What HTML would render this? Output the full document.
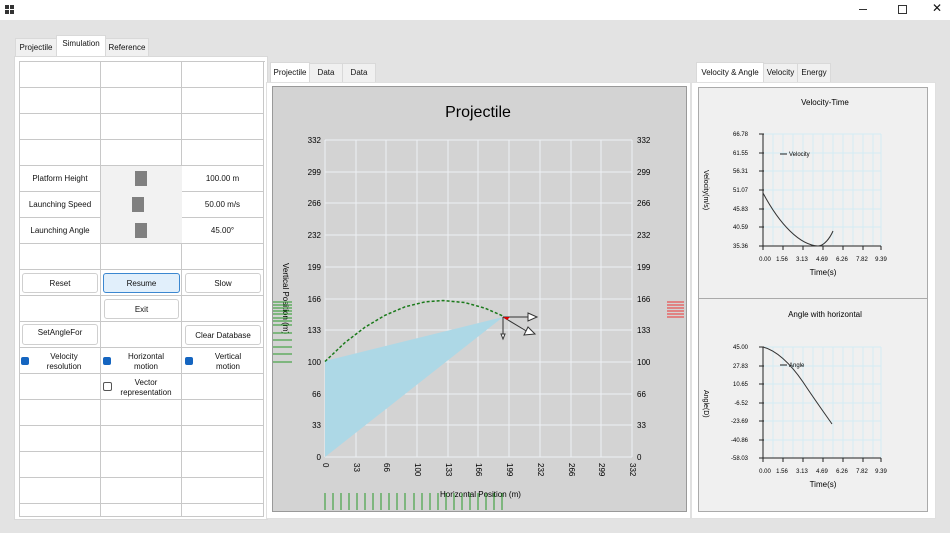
<!DOCTYPE html><html><head><style>
body{margin:0;width:950px;height:533px;background:#e3e3e3;font-family:"Liberation Sans",sans-serif;font-size:8px;color:#111;position:relative;overflow:hidden}
.a{position:absolute}
.tab{position:absolute;background:#f0f0f0;border:1px solid #d9d9d9;border-bottom:none;font-size:8px;text-align:center;line-height:18px}
.tab.s{background:#fff;line-height:16px}
.cell{position:absolute;border-right:1px solid #c8c8c8;border-bottom:1px solid #c8c8c8;box-sizing:border-box;display:flex;align-items:center;justify-content:center;text-align:center;font-size:8px}
.btn{position:absolute;background:#fff;border:1px solid #cfcfcf;border-radius:3px;box-sizing:border-box;display:flex;align-items:center;justify-content:center;font-size:8px}
.cb{position:absolute;width:8px;height:8px;border-radius:2px;background:#1565c0}
</style></head><body>
<div class="a" style="left:0;top:0;width:950px;height:20px;background:#fff"></div>
<div class="a" style="left:5px;top:5px;width:4px;height:4px;background:#333;box-shadow:5px 0 #333,0 5px #333,5px 5px #333"></div>
<div class="a" style="left:859px;top:9px;width:8px;height:1px;background:#333"></div>
<div class="a" style="left:898px;top:5px;width:7px;height:7px;border:1px solid #333"></div>
<div class="a" style="left:932px;top:1px;font-size:12px">✕</div>

<div class="tab" style="left:15px;top:38px;width:40px">Projectile</div>
<div class="tab s" style="left:56px;top:35px;width:48px;height:21px">Simulation</div>
<div class="tab" style="left:105px;top:38px;width:42px">Reference</div>
<div class="a" style="left:14px;top:56px;width:252px;height:462px;background:#fff;border:1px solid #d9d9d9"></div>
<div class="a" style="left:19px;top:61px;width:245px;height:455px;border-left:1px solid #c8c8c8;border-top:1px solid #c8c8c8"></div>
<div id="g"></div>

<div class="tab s" style="left:270px;top:62px;width:38px;height:20px;line-height:20px">Projectile</div>
<div class="tab" style="left:309px;top:63px;width:32px">Data</div>
<div class="tab" style="left:342px;top:63px;width:32px">Data</div>
<div class="a" style="left:266px;top:82px;width:423px;height:435px;background:#fff;border:1px solid #e0e0e0"></div>
<div class="a" style="left:272px;top:86px;width:413px;height:424px;background:#d3d3d3;border:1px solid #999"></div>
<svg class="a" style="left:0;top:0" width="950" height="533">
<text x="478" y="117" font-size="16" text-anchor="middle" font-family="Liberation Sans">Projectile</text>
<g stroke="#eef0f4" stroke-width="1" fill="none">
<path d="M325 140V457M356 140V457M386 140V457M417 140V457M448 140V457M478 140V457M509 140V457M540 140V457M571 140V457M601 140V457M632 140V457M325 140H632M325 172H632M325 203H632M325 235H632M325 267H632M325 299H632M325 330H632M325 362H632M325 394H632M325 425H632M325 457H632"/></g>
<polygon points="325,361 503,317 325,457" fill="#add8e6"/>
<polyline points="325,361.5 345,342.6 365,327.2 385,315.3 405,306.8 425,301.9 443,300.5 465,302.6 485,308.2 503,316" fill="none" stroke="#1a7a1a" stroke-width="1.5" stroke-dasharray="3,2"/>
<g stroke="#333" fill="none" stroke-width="1"><path d="M503 317H530M503 317V336M503 317L528 332"/><path d="M528 313L537 317L528 321Z" fill="#fff"/><path d="M524 335L535 334L528 327Z" fill="#fff"/><path d="M501 334L503 339L505 334Z" fill="#fff"/></g>
<path d="M503 317L510 317L507 320Z" fill="#d00"/>
<g font-size="8" text-anchor="end">
<text x="321" y="143">332</text><text x="321" y="175">299</text><text x="321" y="206">266</text><text x="321" y="238">232</text><text x="321" y="270">199</text><text x="321" y="302">166</text><text x="321" y="333">133</text><text x="321" y="365">100</text><text x="321" y="397">66</text><text x="321" y="428">33</text><text x="321" y="460">0</text></g>
<g font-size="8"><text x="637" y="143">332</text><text x="637" y="175">299</text><text x="637" y="206">266</text><text x="637" y="238">232</text><text x="637" y="270">199</text><text x="637" y="302">166</text><text x="637" y="333">133</text><text x="637" y="365">100</text><text x="637" y="397">66</text><text x="637" y="428">33</text><text x="637" y="460">0</text></g>
<g font-size="8"><text transform="translate(323,463) rotate(90)">0</text><text transform="translate(354,463) rotate(90)">33</text><text transform="translate(384,463) rotate(90)">66</text><text transform="translate(415,463) rotate(90)">100</text><text transform="translate(446,463) rotate(90)">133</text><text transform="translate(476,463) rotate(90)">166</text><text transform="translate(507,463) rotate(90)">199</text><text transform="translate(538,463) rotate(90)">232</text><text transform="translate(569,463) rotate(90)">266</text><text transform="translate(599,463) rotate(90)">299</text><text transform="translate(630,463) rotate(90)">332</text>
<text transform="translate(283,263) rotate(90)">Vertical Position (m)</text>
<text x="440" y="497">Horizontal Position (m)</text></g>
<g stroke="#2a9a2a" fill="none"><path d="M273 302H292M273 305H292M273 308H292M273 311H292M273 314H292M273 318H292M273 321H292M273 325H292M273 333H292M273 340H292M273 347H292M273 354H292M273 362H292"/>
<path d="M325 510V493M333 510V493M341 510V493M349 510V493M357 510V493M365 510V493M373 510V493M381 510V493M389 510V493M397 510V493M405 510V493M414 510V493M422 510V493M430 510V493M438 510V493M446 510V493M454 510V493M462 510V493M470 510V493M478 510V493M486 510V493M494 510V493M502 510V493"/></g>
<g stroke="#e33" fill="none"><path d="M667 302H684M667 305H684M667 308H684M667 311H684M667 314H684M667 317H684"/></g>
</svg>

<div class="tab s" style="left:696px;top:62px;width:66px;height:20px;line-height:20px">Velocity &amp; Angle</div>
<div class="tab" style="left:763px;top:63px;width:33px">Velocity</div>
<div class="tab" style="left:797px;top:63px;width:32px">Energy</div>
<div class="a" style="left:691px;top:82px;width:243px;height:435px;background:#fff;border:1px solid #e0e0e0"></div>
<div class="a" style="left:698px;top:87px;width:228px;height:211px;background:#f0f0f0;border:1px solid #aaa"></div>
<div class="a" style="left:698px;top:298px;width:228px;height:212px;background:#f0f0f0;border:1px solid #aaa"></div>
<svg class="a" style="left:0;top:0" width="950" height="533" font-family="Liberation Sans" font-size="6">
<text x="825" y="105" font-size="8" text-anchor="middle">Velocity-Time</text>
<text x="825" y="317" font-size="8" text-anchor="middle">Angle with horizontal</text>
<g stroke="#d4ecf4" fill="none"><path d="M763 134H881M763 153H881M763 171H881M763 190H881M763 209H881M763 227H881M763 246H881M773 134V246M783 134V246M793 134V246M803 134V246M813 134V246M823 134V246M833 134V246M843 134V246M853 134V246M863 134V246M873 134V246M881 134V246"/>
<path d="M763 347H881M763 366H881M763 384H881M763 403H881M763 421H881M763 440H881M763 458H881M773 347V458M783 347V458M793 347V458M803 347V458M813 347V458M823 347V458M833 347V458M843 347V458M853 347V458M863 347V458M873 347V458M881 347V458"/></g>
<g stroke="#222" fill="none"><path d="M763 134V246H881M759 134H764M759 153H764M759 171H764M759 190H764M759 209H764M759 227H764M759 246H764M763 246V250M783 246V250M803 246V250M823 246V250M843 246V250M863 246V250M881 246V250"/>
<path d="M763 347V458H881M759 347H764M759 366H764M759 384H764M759 403H764M759 421H764M759 440H764M759 458H764M763 458V462M783 458V462M803 458V462M823 458V462M843 458V462M863 458V462M881 458V462"/>
<path d="M780 154H787M780 365H787"/></g>
<path d="M763 193C780 225 800 245 818 246C824 246 830 238 833 231" fill="none" stroke="#333"/>
<path d="M763 347C775 350 790 362 805 385C815 400 825 414 832 424" fill="none" stroke="#333"/>
<text x="789" y="156">Velocity</text><text x="789" y="367">Angle</text>
<g text-anchor="end"><text x="748" y="136">66.78</text><text x="748" y="155">61.55</text><text x="748" y="173">56.31</text><text x="748" y="192">51.07</text><text x="748" y="211">45.83</text><text x="748" y="229">40.59</text><text x="748" y="248">35.36</text>
<text x="748" y="349">45.00</text><text x="748" y="368">27.83</text><text x="748" y="386">10.65</text><text x="748" y="405">-6.52</text><text x="748" y="423">-23.69</text><text x="748" y="442">-40.86</text><text x="748" y="460">-58.03</text></g>
<g text-anchor="middle"><text x="765" y="261">0.00</text><text x="782" y="261">1.56</text><text x="802" y="261">3.13</text><text x="822" y="261">4.69</text><text x="842" y="261">6.26</text><text x="862" y="261">7.82</text><text x="881" y="261">9.39</text>
<text x="765" y="473">0.00</text><text x="782" y="473">1.56</text><text x="802" y="473">3.13</text><text x="822" y="473">4.69</text><text x="842" y="473">6.26</text><text x="862" y="473">7.82</text><text x="881" y="473">9.39</text>
<text x="823" y="275" font-size="8">Time(s)</text><text x="823" y="487" font-size="8">Time(s)</text></g>
<text transform="translate(704,170) rotate(90)" font-size="7">Velocity(m/s)</text>
<text transform="translate(704,390) rotate(90)" font-size="7">Angle(D)</text>
</svg>

<div class="cell" style="left:20px;top:166px;width:81px;height:26px;background:#fff">Platform Height</div>
<div class="cell" style="left:20px;top:192px;width:81px;height:26px">Launching Speed</div>
<div class="cell" style="left:20px;top:218px;width:81px;height:26px">Launching Angle</div>
<div class="cell" style="left:182px;top:166px;width:82px;height:26px">100.00 m</div>
<div class="cell" style="left:182px;top:192px;width:82px;height:26px">50.00 m/s</div>
<div class="cell" style="left:182px;top:218px;width:82px;height:26px">45.00°</div>
<div class="a" style="left:101px;top:166px;width:81px;height:77px;background:#f2f2f2"></div>
<div class="a" style="left:135px;top:171px;width:12px;height:15px;background:#808080"></div>
<div class="a" style="left:132px;top:197px;width:12px;height:15px;background:#808080"></div>
<div class="a" style="left:135px;top:223px;width:12px;height:15px;background:#808080"></div>
<script>
var g=document.getElementById('g'),h='';
var ys=[61,87,113,139,165,191,217,243,269,295,321,347,373,399,425,451,477,503];
for(var i=0;i<ys.length;i++){var t=ys[i];var hh=(i==17)?13:26;
[[20,81],[101,81],[182,82]].forEach(function(c){h+='<div class="cell" style="left:'+c[0]+'px;top:'+(t+1)+'px;width:'+c[1]+'px;height:'+hh+'px"></div>';});}
g.innerHTML=h;
</script>
<div class="btn" style="left:22px;top:273px;width:76px;height:20px">Reset</div>
<div class="btn" style="left:103px;top:273px;width:77px;height:20px;background:#e1effb;border-color:#3b87d0">Resume</div>
<div class="btn" style="left:185px;top:273px;width:76px;height:20px">Slow</div>
<div class="btn" style="left:104px;top:299px;width:75px;height:20px">Exit</div>
<div class="btn" style="left:22px;top:324px;width:76px;height:21px;align-items:flex-start;padding-top:3px">SetAngleFor</div>
<div class="btn" style="left:185px;top:325px;width:76px;height:20px">Clear Database</div>
<div class="cb" style="left:21px;top:357px"></div><div class="a" style="left:34px;top:352px;width:60px;text-align:center;line-height:10px">Velocity<br>resolution</div>
<div class="cb" style="left:103px;top:357px"></div><div class="a" style="left:116px;top:352px;width:60px;text-align:center;line-height:10px">Horizontal<br>motion</div>
<div class="cb" style="left:185px;top:357px"></div><div class="a" style="left:198px;top:352px;width:60px;text-align:center;line-height:10px">Vertical<br>motion</div>
<div class="a" style="left:103px;top:382px;width:7px;height:7px;border:1px solid #555;border-radius:2px;background:#fff"></div><div class="a" style="left:116px;top:378px;width:60px;text-align:center;line-height:10px">Vector<br>representation</div>
</body></html>
